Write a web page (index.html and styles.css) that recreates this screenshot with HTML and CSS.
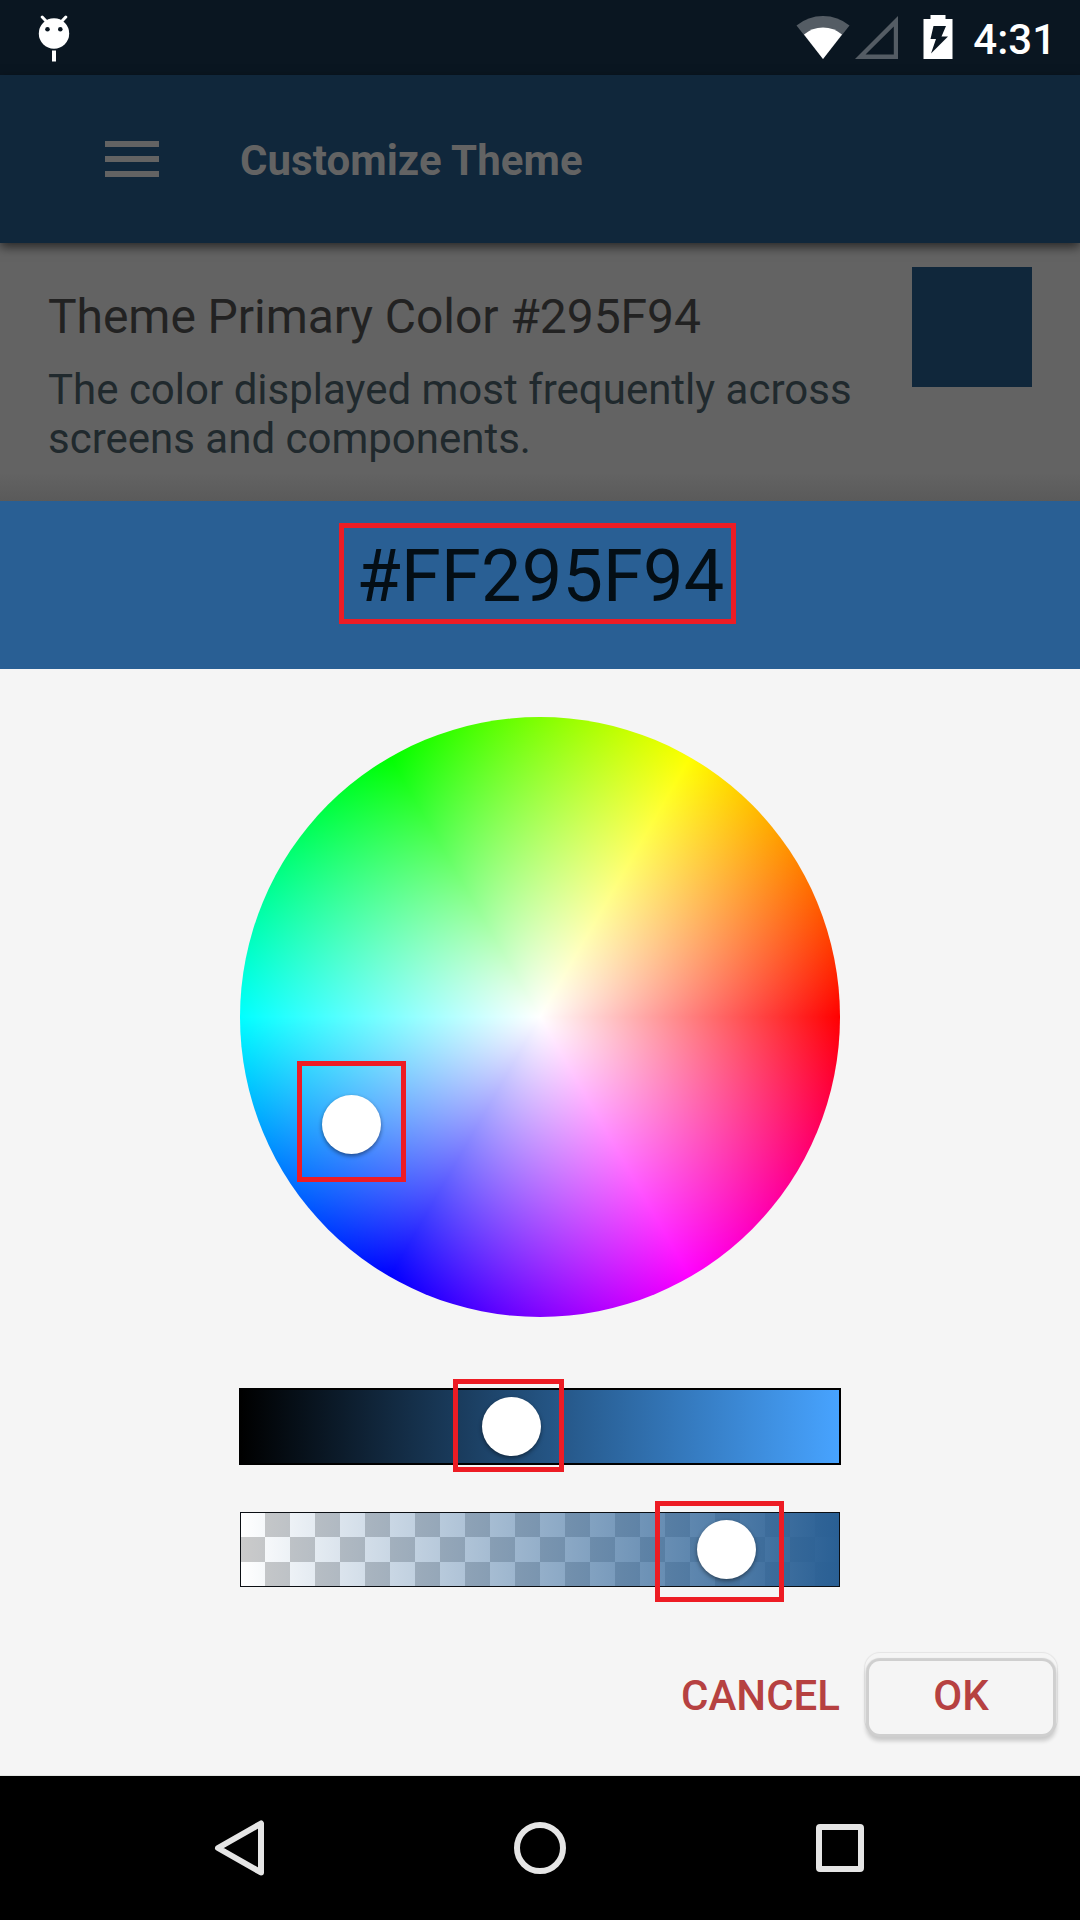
FILE: index.html
```html
<!DOCTYPE html>
<html lang="en">
<head>
<meta charset="utf-8">
<title>Customize Theme</title>
<link rel="stylesheet" href="styles.css">
</head>
<body>
<div class="screen">
  <header class="status-bar">
    <svg class="debug-icon" width="32" height="48" viewBox="0 0 32 48">
      <path d="M4.200 2 8 6M27.800 2 24 6" stroke="#fff" stroke-width="3" stroke-linecap="round"/>
      <circle cx="16" cy="18.500" r="15.200" fill="#fff"/>
      <circle cx="9.500" cy="14.300" r="2.300" fill="#0a1621"/>
      <circle cx="22.300" cy="14.300" r="2.300" fill="#0a1621"/>
      <path d="M14 35.500h4v11h-4z" fill="#fff"/>
    </svg>
    <div class="status-icons">
      <svg class="wifi" width="54" height="44" viewBox="0 0 54 44">
        <path d="M.500 10.500Q12 1 27 1t26.500 9.500L27 44z" fill="#545c64"/>
        <path d="M8 19.500Q16 12.500 27 12.500t19 7L27 44z" fill="#fff"/>
      </svg>
      <svg class="signal" width="43" height="44" viewBox="0 0 43 44">
        <path fill-rule="evenodd" d="M43 1v43H0zM38.800 11.500v28H10.500z" fill="#545c64"/>
      </svg>
      <svg class="battery" width="30" height="45" viewBox="0 0 30 45">
        <path fill-rule="evenodd" d="M7.500 0h15v4H29.500v40H.500V4h7zM10.500 11h12.500l-4.500 10.500h6.500L8 38.500l5-14.500H7.500z" fill="#fff"/>
      </svg>
      <span class="clock">4:31</span>
    </div>
  </header>

  <div class="toolbar">
    <div class="menu"><i></i><i></i><i></i></div>
    <h1>Customize Theme</h1>
  </div>

  <section class="preference">
    <div class="preference-text">
      <h2>Theme Primary Color #295F94</h2>
      <p>The color displayed most frequently across screens and components.</p>
    </div>
    <div class="swatch"></div>
  </section>

  <section class="picker">
    <div class="picker-header"><span class="hex marked">#FF295F94</span></div>
    <div class="picker-body">
      <div class="wheel"><div class="handle wheel-handle"><b></b></div></div>
      <div class="slider value-slider"><div class="handle value-handle"><b></b></div></div>
      <div class="slider alpha-slider"><div class="handle alpha-handle"><b></b></div></div>
    </div>
    <div class="actions">
      <button class="cancel">CANCEL</button>
      <button class="ok">OK</button>
    </div>
  </section>

  <nav class="nav-bar">
    <svg width="60" height="60" viewBox="0 0 60 60"><path d="M51 5.500v49L8 30z"/></svg>
    <svg width="60" height="60" viewBox="0 0 60 60"><circle cx="30" cy="30" r="23"/></svg>
    <svg width="60" height="60" viewBox="0 0 60 60"><rect x="9" y="9" width="42" height="42" rx="1"/></svg>
  </nav>
</div>
</body>
</html>
```
FILE: styles.css
```css
* { box-sizing: border-box; }
body { margin: 0; font-family: Roboto, sans-serif; background: #000; }
h1, h2, p { margin: 0; }
button { font: inherit; border: 0; background: none; padding: 0; }
svg { display: block; flex: none; }

.screen { width: 1080px; height: 1920px; display: flex; flex-direction: column; overflow: hidden; }
.screen > * { flex: none; }

.status-bar { height: 75px; background: #0a1621; display: flex; justify-content: space-between; align-items: flex-start; padding: 15px 24px 0 38px; }
.status-icons { display: flex; }
.signal { margin-left: 5px; }
.battery { margin-left: 25px; }
.clock { margin-left: 20px; color: #fff; font-size: 42px; font-weight: 500; line-height: 49px; }

.toolbar { height: 168px; background: #10273b; display: flex; align-items: center; padding-left: 105px; position: relative; box-shadow: 0 4px 10px rgba(0, 0, 0, .6); }
.menu { width: 54px; display: flex; flex-direction: column; gap: 9px; }
.menu i { height: 6px; background: #636363; }
h1 { margin-left: 81px; padding-top: 3px; font-size: 42px; font-weight: 700; line-height: 49px; color: #636363; letter-spacing: .06px; }

.preference { height: 258px; display: flex; justify-content: space-between; padding: 24px 48px 0; background: linear-gradient(#636363 230px, #5a5a5a); }
.preference-text { width: 820px; padding-top: 22px; }
h2 { font-size: 48px; font-weight: 400; line-height: 56px; color: #222; letter-spacing: -.06px; }
p { margin-top: 20px; font-size: 42px; line-height: 49px; color: #20292d; }
.swatch { width: 120px; height: 120px; background: #10273b; }

.picker { height: 1275px; background: #f5f5f5; border-bottom: 1px solid #e3e6e3; position: relative; }
.picker-header { height: 168px; background: #295f94; display: flex; justify-content: center; padding: 22px 5px 0 0; }
.hex { height: 101px; width: 397px; padding-left: 6px; text-align: center; border: 5px solid #ed1c24; font-size: 72px; line-height: 97px; color: #040e15; letter-spacing: .2px; }

.picker-body { padding: 48px 0 0; display: flex; flex-direction: column; align-items: center; }
.wheel, .slider { position: relative; }
.wheel { width: 600px; height: 600px; border-radius: 50%; background: radial-gradient(closest-side, #fff, rgba(255, 255, 255, 0)), conic-gradient(from 90deg, #f00, #f0f, #00f, #0ff, #0f0, #ff0, #f00); }
.value-slider { width: 602px; height: 77px; margin-top: 71px; border: 2px solid #000; background: linear-gradient(90deg, #000, #295f94 58%, #47a3ff); }
.alpha-slider { width: 600px; height: 75px; margin-top: 47px; border: 1px solid #0b0f14; background: linear-gradient(90deg, rgba(41, 95, 148, 0), #295f94) border-box, repeating-conic-gradient(#fff 0 25%, #cbcbcb 0 50%) 0 25px / 50px 50px border-box; background-origin: border-box; }

/* Drag handles with their callout frames */
.handle { position: absolute; border: 5px solid #ed1c24; }
.handle b { position: absolute; width: 59px; height: 59px; border-radius: 50%; background: #fff; box-shadow: 0 2px 4px rgba(0, 0, 0, .45); }
.wheel-handle { left: 57px; top: 344px; width: 109px; height: 121px; }
.wheel-handle b { left: 20px; top: 29px; }
.value-handle { left: 212px; top: -11px; width: 111px; height: 93px; }
.value-handle b { left: 24px; top: 13px; }
.alpha-handle { left: 414px; top: -12px; width: 129px; height: 101px; }
.alpha-handle b { left: 37px; top: 14px; }

.actions { display: flex; justify-content: flex-end; align-items: center; padding: 74px 27px 0 0; font-size: 42px; font-weight: 500; color: #b64141; }
.actions button { color: inherit; height: 73px; line-height: 69px; padding-bottom: 6px; }
.cancel { margin-right: 29px; }
.ok { width: 184px; border-radius: 11px; background: #f5f5f5; box-shadow: 0 0 1px 3px #cfcfcf, 0 4px 4px 3px rgba(0, 0, 0, .18), 0 -4px 0 4px #f5f5f5, 0 -4px 1px 5px #e4e4e4; }

.nav-bar { height: 144px; background: #000; display: flex; justify-content: center; align-items: center; gap: 240px; }
.nav-bar svg { fill: none; stroke: #e5e5e5; stroke-width: 6; stroke-linejoin: round; }
```
